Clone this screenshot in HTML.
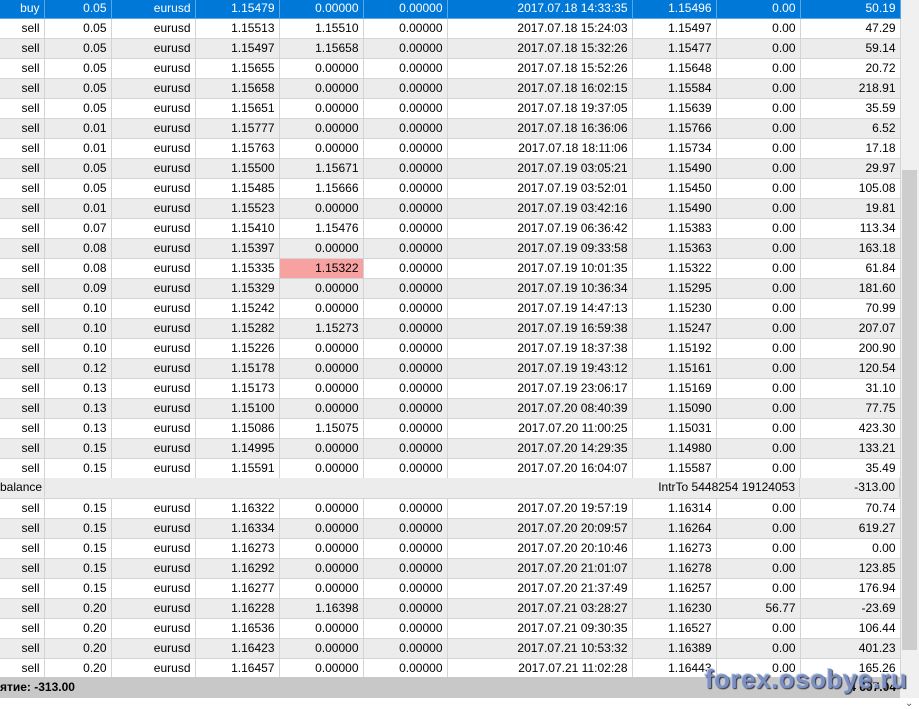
<!DOCTYPE html>
<html><head><meta charset="utf-8"><style>
body{margin:0;width:919px;height:708px;overflow:hidden;background:#fff;font-family:"Liberation Sans",sans-serif;font-size:12px;color:#000;position:relative}
table{position:absolute;left:0;top:-1px;border-collapse:collapse;table-layout:fixed;width:900px}
td{height:19px;padding:0 4px 0 0;text-align:right;border-right:1px solid #d4d4d4;border-bottom:1px solid #d4d4d4;white-space:nowrap;overflow:hidden;line-height:19px}
tr:nth-child(odd) td{background:#ececec}
tr.s td{background:#0078d7;color:#fff;border-color:#5aa6e6}
td.p{background:#f7a1a1!important}
#sb{position:absolute;left:900px;top:0;width:19px;height:698px;background:#f0f0f0}
#th{position:absolute;left:902px;top:170px;width:15px;height:480px;background:#cdcdcd}
#ft{position:absolute;left:0;top:677px;width:900px;height:21px;background:#c8c8c8;font-weight:bold;line-height:21px}
#wm{position:absolute;left:705px;top:664px;font-size:26px;font-weight:bold;color:#7b90c0;text-shadow:1px 1px 1px #334,-1px -1px 0 #bcc8e6;letter-spacing:0.5px}
#bal{position:absolute;left:0;top:478px;width:899px;height:19px;background:#ececec;border-right:1px solid #d4d4d4;line-height:19px}
</style></head><body>
<div id="sb"><div style="position:absolute;left:5px;top:698px;font-size:10px;color:#606060">&#8964;</div></div>
<div id="th"></div>
<table>
<colgroup><col style="width:44px"><col style="width:67px"><col style="width:84px"><col style="width:84px"><col style="width:84px"><col style="width:84px"><col style="width:185px"><col style="width:84px"><col style="width:84px"><col style="width:100px"></colgroup>
<tr class="s"><td>buy</td><td>0.05</td><td>eurusd</td><td>1.15479</td><td>0.00000</td><td>0.00000</td><td>2017.07.18 14:33:35</td><td>1.15496</td><td>0.00</td><td>50.19</td></tr>
<tr><td>sell</td><td>0.05</td><td>eurusd</td><td>1.15513</td><td>1.15510</td><td>0.00000</td><td>2017.07.18 15:24:03</td><td>1.15497</td><td>0.00</td><td>47.29</td></tr>
<tr><td>sell</td><td>0.05</td><td>eurusd</td><td>1.15497</td><td>1.15658</td><td>0.00000</td><td>2017.07.18 15:32:26</td><td>1.15477</td><td>0.00</td><td>59.14</td></tr>
<tr><td>sell</td><td>0.05</td><td>eurusd</td><td>1.15655</td><td>0.00000</td><td>0.00000</td><td>2017.07.18 15:52:26</td><td>1.15648</td><td>0.00</td><td>20.72</td></tr>
<tr><td>sell</td><td>0.05</td><td>eurusd</td><td>1.15658</td><td>0.00000</td><td>0.00000</td><td>2017.07.18 16:02:15</td><td>1.15584</td><td>0.00</td><td>218.91</td></tr>
<tr><td>sell</td><td>0.05</td><td>eurusd</td><td>1.15651</td><td>0.00000</td><td>0.00000</td><td>2017.07.18 19:37:05</td><td>1.15639</td><td>0.00</td><td>35.59</td></tr>
<tr><td>sell</td><td>0.01</td><td>eurusd</td><td>1.15777</td><td>0.00000</td><td>0.00000</td><td>2017.07.18 16:36:06</td><td>1.15766</td><td>0.00</td><td>6.52</td></tr>
<tr><td>sell</td><td>0.01</td><td>eurusd</td><td>1.15763</td><td>0.00000</td><td>0.00000</td><td>2017.07.18 18:11:06</td><td>1.15734</td><td>0.00</td><td>17.18</td></tr>
<tr><td>sell</td><td>0.05</td><td>eurusd</td><td>1.15500</td><td>1.15671</td><td>0.00000</td><td>2017.07.19 03:05:21</td><td>1.15490</td><td>0.00</td><td>29.97</td></tr>
<tr><td>sell</td><td>0.05</td><td>eurusd</td><td>1.15485</td><td>1.15666</td><td>0.00000</td><td>2017.07.19 03:52:01</td><td>1.15450</td><td>0.00</td><td>105.08</td></tr>
<tr><td>sell</td><td>0.01</td><td>eurusd</td><td>1.15523</td><td>0.00000</td><td>0.00000</td><td>2017.07.19 03:42:16</td><td>1.15490</td><td>0.00</td><td>19.81</td></tr>
<tr><td>sell</td><td>0.07</td><td>eurusd</td><td>1.15410</td><td>1.15476</td><td>0.00000</td><td>2017.07.19 06:36:42</td><td>1.15383</td><td>0.00</td><td>113.34</td></tr>
<tr><td>sell</td><td>0.08</td><td>eurusd</td><td>1.15397</td><td>0.00000</td><td>0.00000</td><td>2017.07.19 09:33:58</td><td>1.15363</td><td>0.00</td><td>163.18</td></tr>
<tr><td>sell</td><td>0.08</td><td>eurusd</td><td>1.15335</td><td class="p">1.15322</td><td>0.00000</td><td>2017.07.19 10:01:35</td><td>1.15322</td><td>0.00</td><td>61.84</td></tr>
<tr><td>sell</td><td>0.09</td><td>eurusd</td><td>1.15329</td><td>0.00000</td><td>0.00000</td><td>2017.07.19 10:36:34</td><td>1.15295</td><td>0.00</td><td>181.60</td></tr>
<tr><td>sell</td><td>0.10</td><td>eurusd</td><td>1.15242</td><td>0.00000</td><td>0.00000</td><td>2017.07.19 14:47:13</td><td>1.15230</td><td>0.00</td><td>70.99</td></tr>
<tr><td>sell</td><td>0.10</td><td>eurusd</td><td>1.15282</td><td>1.15273</td><td>0.00000</td><td>2017.07.19 16:59:38</td><td>1.15247</td><td>0.00</td><td>207.07</td></tr>
<tr><td>sell</td><td>0.10</td><td>eurusd</td><td>1.15226</td><td>0.00000</td><td>0.00000</td><td>2017.07.19 18:37:38</td><td>1.15192</td><td>0.00</td><td>200.90</td></tr>
<tr><td>sell</td><td>0.12</td><td>eurusd</td><td>1.15178</td><td>0.00000</td><td>0.00000</td><td>2017.07.19 19:43:12</td><td>1.15161</td><td>0.00</td><td>120.54</td></tr>
<tr><td>sell</td><td>0.13</td><td>eurusd</td><td>1.15173</td><td>0.00000</td><td>0.00000</td><td>2017.07.19 23:06:17</td><td>1.15169</td><td>0.00</td><td>31.10</td></tr>
<tr><td>sell</td><td>0.13</td><td>eurusd</td><td>1.15100</td><td>0.00000</td><td>0.00000</td><td>2017.07.20 08:40:39</td><td>1.15090</td><td>0.00</td><td>77.75</td></tr>
<tr><td>sell</td><td>0.13</td><td>eurusd</td><td>1.15086</td><td>1.15075</td><td>0.00000</td><td>2017.07.20 11:00:25</td><td>1.15031</td><td>0.00</td><td>423.30</td></tr>
<tr><td>sell</td><td>0.15</td><td>eurusd</td><td>1.14995</td><td>0.00000</td><td>0.00000</td><td>2017.07.20 14:29:35</td><td>1.14980</td><td>0.00</td><td>133.21</td></tr>
<tr><td>sell</td><td>0.15</td><td>eurusd</td><td>1.15591</td><td>0.00000</td><td>0.00000</td><td>2017.07.20 16:04:07</td><td>1.15587</td><td>0.00</td><td>35.49</td></tr>
<tr><td colspan="10">&nbsp;</td></tr>
<tr><td>sell</td><td>0.15</td><td>eurusd</td><td>1.16322</td><td>0.00000</td><td>0.00000</td><td>2017.07.20 19:57:19</td><td>1.16314</td><td>0.00</td><td>70.74</td></tr>
<tr><td>sell</td><td>0.15</td><td>eurusd</td><td>1.16334</td><td>0.00000</td><td>0.00000</td><td>2017.07.20 20:09:57</td><td>1.16264</td><td>0.00</td><td>619.27</td></tr>
<tr><td>sell</td><td>0.15</td><td>eurusd</td><td>1.16273</td><td>0.00000</td><td>0.00000</td><td>2017.07.20 20:10:46</td><td>1.16273</td><td>0.00</td><td>0.00</td></tr>
<tr><td>sell</td><td>0.15</td><td>eurusd</td><td>1.16292</td><td>0.00000</td><td>0.00000</td><td>2017.07.20 21:01:07</td><td>1.16278</td><td>0.00</td><td>123.85</td></tr>
<tr><td>sell</td><td>0.15</td><td>eurusd</td><td>1.16277</td><td>0.00000</td><td>0.00000</td><td>2017.07.20 21:37:49</td><td>1.16257</td><td>0.00</td><td>176.94</td></tr>
<tr><td>sell</td><td>0.20</td><td>eurusd</td><td>1.16228</td><td>1.16398</td><td>0.00000</td><td>2017.07.21 03:28:27</td><td>1.16230</td><td>56.77</td><td>-23.69</td></tr>
<tr><td>sell</td><td>0.20</td><td>eurusd</td><td>1.16536</td><td>0.00000</td><td>0.00000</td><td>2017.07.21 09:30:35</td><td>1.16527</td><td>0.00</td><td>106.44</td></tr>
<tr><td>sell</td><td>0.20</td><td>eurusd</td><td>1.16423</td><td>0.00000</td><td>0.00000</td><td>2017.07.21 10:53:32</td><td>1.16389</td><td>0.00</td><td>401.23</td></tr>
<tr><td>sell</td><td>0.20</td><td>eurusd</td><td>1.16457</td><td>0.00000</td><td>0.00000</td><td>2017.07.21 11:02:28</td><td>1.16443</td><td>0.00</td><td>165.26</td></tr>
</table>
<div id="bal"><span style="position:absolute;left:0">balance</span><span style="position:absolute;left:44px;top:0;width:1px;height:19px;background:#d4d4d4"></span><span style="position:absolute;right:104px">IntrTo 5448254 19124053</span><span style="position:absolute;left:799px;top:0;width:1px;height:19px;background:#d4d4d4"></span><span style="position:absolute;right:4px">-313.00</span></div>
<div id="ft"><span style="position:absolute;left:0">ятие: -313.00</span><span style="position:absolute;right:4px">4 697.04</span></div>
<div id="wm">forex.osobye.ru</div>
</body></html>
